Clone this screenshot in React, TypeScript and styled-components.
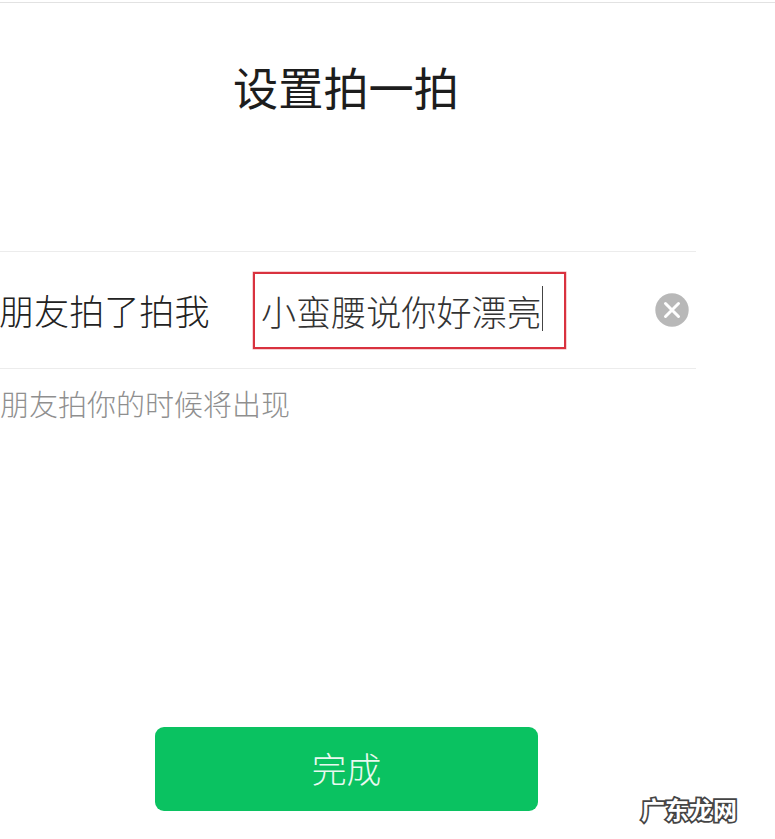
import React from 'react';
import styled, { createGlobalStyle } from 'styled-components';

const GlobalStyle = createGlobalStyle`
    html, body {
        margin: 0;
        padding: 0;
        background: #fff;
        font-family: "Noto Sans CJK SC", "Liberation Sans", sans-serif;
    }
`;

const Page = styled.div`
    position: relative;
    width: 775px;
    height: 839px;
    overflow: hidden;
    background: #fff;
`;

const Column = styled.div`
    width: 692px;
    height: 100%;
    display: flex;
    flex-direction: column;
`;

const TopLine = styled.div`
    height: 1px;
    margin-top: 2px;
    width: 775px;
    background: #e2e2e2;
`;

const Title = styled.h1`
    margin: 52px 0 0;
    width: 692px;
    text-align: center;
    font-size: 45.2px;
    line-height: 64px;
    font-weight: 400;
    color: #1d1d1d;
`;

const FormRow = styled.div`
    margin-top: 132px;
    width: 696px;
    height: 116px;
    border-top: 1px solid #ececec;
    border-bottom: 1px solid #ececec;
    display: flex;
    align-items: center;
`;

const Label = styled.span`
    width: 253px;
    flex: none;
    margin-left: -1px;
    padding-right: 1px;
    font-size: 35.1px;
    line-height: 50px;
    font-weight: 300;
    color: #222;
    white-space: nowrap;
`;

const InputBox = styled.div`
    width: 313px;
    height: 77px;
    flex: none;
    box-sizing: border-box;
    border: 2px solid #d9323f;
    box-shadow: 0 0 0 0.5px rgba(217, 50, 63, 0.45);
    padding-left: 6px;
    display: flex;
    align-items: center;
    font-size: 35.1px;
    font-weight: 300;
    color: #333;
    white-space: nowrap;
`;

const Caret = styled.i`
    display: block;
    width: 1px;
    height: 45px;
    margin: -3px 0 0 0;
    background: #444;
`;

const ClearButton = styled.button`
    width: 34px;
    height: 34px;
    margin-left: 89px;
    padding: 0;
    border: 0;
    background: none;
    flex: none;
    display: block;
`;

const Hint = styled.p`
    margin: 13px 0 0;
    font-size: 29px;
    line-height: 42px;
    font-weight: 300;
    color: #8f8f8f;
    white-space: nowrap;
`;

const DoneButton = styled.button`
    margin: 303px 0 0 155px;
    width: 383px;
    height: 84px;
    flex: none;
    border: 0;
    border-radius: 9px;
    background: #0ac261;
    color: #e9f9f0;
    font-family: inherit;
    font-size: 34.8px;
    font-weight: 300;
    padding: 0 0 2px;
`;

const Watermark = styled.span`
    position: absolute;
    left: 641px;
    top: 791px;
    font-size: 24px;
    line-height: 36px;
    font-weight: 700;
    color: #fff;
    white-space: nowrap;
    -webkit-text-stroke: 3.5px #444;
    paint-order: stroke fill;
`;

export default function App() {
    return <Page>
        <GlobalStyle />
        <Column>
            <TopLine />
            <Title>设置拍一拍</Title>
            <FormRow>
                <Label>朋友拍了拍我</Label>
                <InputBox>小蛮腰说你好漂亮<Caret /></InputBox>
                <ClearButton aria-label='清除'>
                    <svg width='34' height='34' viewBox='0 0 34 34'>
                        <circle cx='17' cy='17' r='16.7' fill='#b8b8b8' />
                        <path d='M10.5 10.5 L23.5 23.5 M23.5 10.5 L10.5 23.5' stroke='#fff' strokeWidth='3' strokeLinecap='round' />
                    </svg>
                </ClearButton>
            </FormRow>
            <Hint>朋友拍你的时候将出现</Hint>
            <DoneButton>完成</DoneButton>
        </Column>
        <Watermark>广东龙网</Watermark>
    </Page>
}
